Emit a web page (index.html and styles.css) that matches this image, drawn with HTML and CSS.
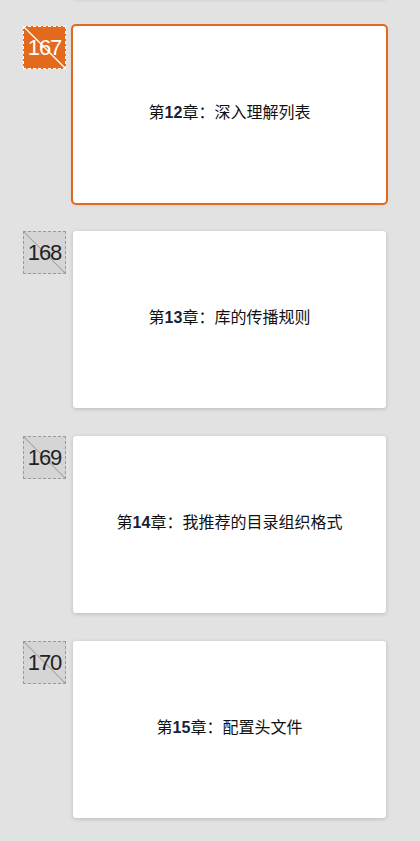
FILE: index.html
```html
<!DOCTYPE html>
<html lang="zh">
<head>
<meta charset="utf-8">
<title>Slides</title>
<link rel="stylesheet" href="styles.css">
</head>
<body>
<div class="pane">
  <div class="list">
    <div class="row">
      <div class="spacer"></div>
      <div class="card"></div>
    </div>
    <div class="row">
      <div class="badge selected">167</div>
      <div class="card selected"><p class="title">第<b>12</b>章：深入理解列表</p></div>
    </div>
    <div class="row">
      <div class="badge">168</div>
      <div class="card"><p class="title">第<b>13</b>章：库的传播规则</p></div>
    </div>
    <div class="row">
      <div class="badge">169</div>
      <div class="card"><p class="title">第<b>14</b>章：我推荐的目录组织格式</p></div>
    </div>
    <div class="row">
      <div class="badge">170</div>
      <div class="card"><p class="title">第<b>15</b>章：配置头文件</p></div>
    </div>
  </div>
</div>
</body>
</html>
```

FILE: styles.css
```css
html, body {
  margin: 0;
  padding: 0;
  background: #e2e2e2;
  height: 100%;
  overflow: hidden;
}
.pane {
  padding-left: 23px;
  width: 363px;
}
.list {
  margin-top: -179px;
  display: flex;
  flex-direction: column;
  gap: 28px;
}
.row {
  display: flex;
  align-items: flex-start;
  gap: 7px;
}
.spacer {
  width: 43px;
  height: 43px;
}
.badge {
  box-sizing: border-box;
  width: 43px;
  height: 43px;
  border: 1px dashed #9a9a9a;
  background-color: #d5d5d5;
  background-image: linear-gradient(to top right, transparent calc(50% - 1px), #a8a8a8 50%, transparent calc(50% + 1px));
  color: #222;
  font-family: "Liberation Sans", Arial, sans-serif;
  font-size: 22px;
  line-height: 41px;
  text-align: center;
  letter-spacing: -1px;
}
.badge.selected {
  border-color: #ffffff;
  background-color: #e36a1d;
  background-image: linear-gradient(to top right, transparent calc(50% - 1.3px), #ffffff 50%, transparent calc(50% + 1.3px));
  color: #fff;
}
.card {
  width: 313px;
  height: 177px;
  background: #fff;
  border-radius: 3px;
  box-shadow: 0 1px 4px rgba(0, 0, 0, 0.18);
  display: flex;
  align-items: center;
  justify-content: center;
}
.card.selected {
  outline: 2px solid #e36a1d;
  border-radius: 3px;
}
.title {
  margin: 0 0 5px 0;
  font-family: "Noto Sans CJK SC", "Liberation Sans", sans-serif;
  font-size: 16px;
  font-weight: 400;
  line-height: 1;
  color: #111;
}
.title b {
  font-family: "Liberation Sans", Arial, sans-serif;
  font-weight: bold;
  color: #18213d;
}
```
